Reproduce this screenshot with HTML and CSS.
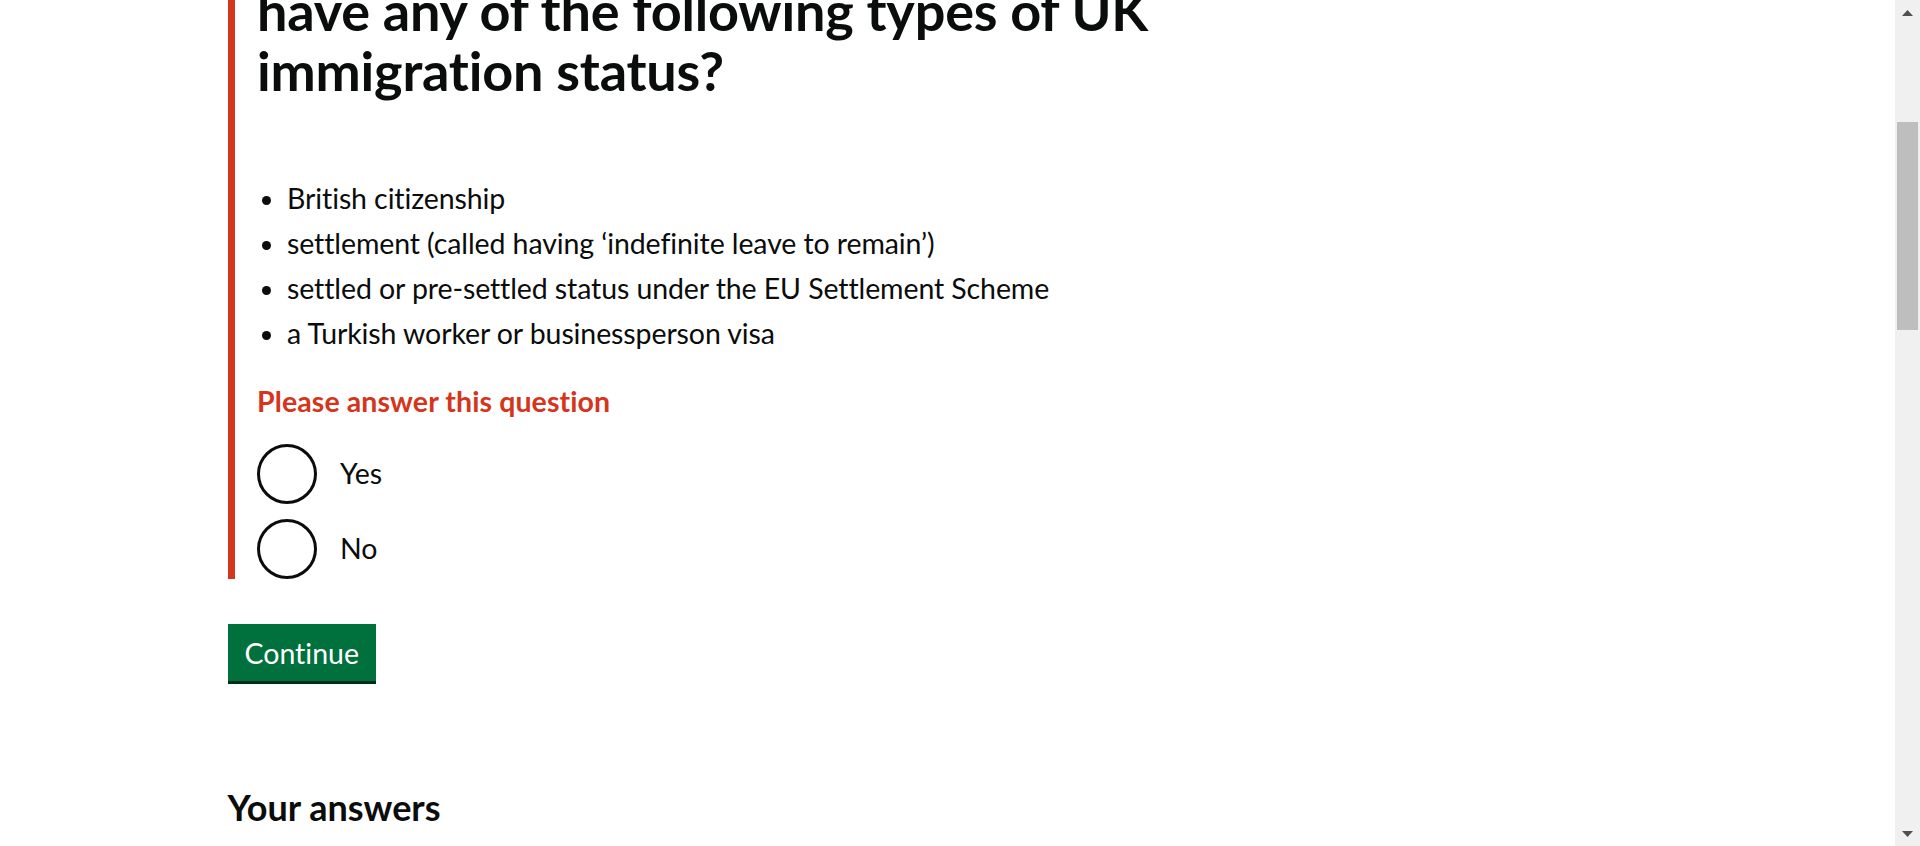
FILE: index.html
```html
<!DOCTYPE html>
<html lang="en">
<head>
<meta charset="utf-8">
<title>Immigration status</title>
<link rel="stylesheet" href="styles.css">
</head>
<body>
<div class="viewport">
  <main class="width-container">
    <form class="form">
      <div class="form-group form-group--error">
        <fieldset class="fieldset">
          <legend class="legend">
            <h1 class="heading-l">have any of the following types of UK immigration status?</h1>
          </legend>
          <ul class="list list--bullet">
            <li>British citizenship</li>
            <li>settlement (called having ‘indefinite leave to remain’)</li>
            <li>settled or pre-settled status under the EU Settlement Scheme</li>
            <li>a Turkish worker or businessperson visa</li>
          </ul>
          <p class="error-message">Please answer this question</p>
          <div class="radios">
            <label class="radio">
              <input class="radio__input" type="radio" name="status" value="yes">
              <span class="radio__circle"></span>
              <span class="radio__label">Yes</span>
            </label>
            <label class="radio">
              <input class="radio__input" type="radio" name="status" value="no">
              <span class="radio__circle"></span>
              <span class="radio__label">No</span>
            </label>
          </div>
        </fieldset>
      </div>
      <button class="button" type="button">Continue</button>
    </form>
    <h2 class="heading-m">Your answers</h2>
  </main>
</div>
<div class="scrollbar" aria-hidden="true">
  <div class="scrollbar__btn">
    <svg width="11" height="6" viewBox="0 0 11 6"><polygon points="5.5,0 11,6 0,6" fill="#505050"/></svg>
  </div>
  <div class="scrollbar__track"><div class="scrollbar__thumb"></div></div>
  <div class="scrollbar__btn">
    <svg width="11" height="6" viewBox="0 0 11 6"><polygon points="0,0 11,0 5.5,6" fill="#505050"/></svg>
  </div>
</div>
</body>
</html>
```

FILE: styles.css
```css
html, body {
  margin: 0;
  padding: 0;
  height: 100%;
  background: #ffffff;
}

body {
  display: flex;
  overflow: hidden;
  font-family: Lato, "Liberation Sans", Arial, sans-serif;
  font-variant-ligatures: no-common-ligatures;
  color: #0b0c0c;
}

.viewport {
  flex: 1;
  min-width: 0;
  overflow: hidden;
}

.width-container {
  max-width: 1440px;
  margin: 0 auto;
}

.form {
  margin: 0;
}

.form-group {
  margin-bottom: 45px;
}

.form-group--error {
  border-left: 7.5px solid #d4351c;
  padding-left: 22.5px;
}

.fieldset {
  margin: 0;
  padding: 0;
  border: 0;
  min-width: 0;
}

.legend {
  padding: 0;
  display: block;
  width: 100%;
}

.heading-l {
  margin: -19px 0 79px;
  font-size: 54px;
  line-height: 60px;
  font-weight: 700;
  letter-spacing: -0.2px;
  max-width: 960px;
}

.list {
  margin: 0 0 30px;
  padding: 0 0 0 30px;
  font-size: 28.5px;
  line-height: 37.5px;
  letter-spacing: -0.1px;
}

.list li {
  margin-bottom: 7.5px;
}

.list li:last-child {
  margin-bottom: 0;
}

.error-message {
  margin: 0 0 23.5px;
  color: #d4351c;
  font-weight: 700;
  font-size: 28.5px;
  line-height: 37.5px;
  letter-spacing: 0.1px;
}

.radios {
  display: flex;
  flex-direction: column;
  gap: 15px;
}

.radio {
  display: flex;
  align-items: center;
  height: 60px;
  cursor: pointer;
}

.radio__input {
  position: absolute;
  opacity: 0;
  margin: 0;
  width: 1px;
  height: 1px;
}

.radio__circle {
  box-sizing: border-box;
  width: 60px;
  height: 60px;
  border: 3px solid #0b0c0c;
  border-radius: 50%;
  flex: none;
}

.radio__label {
  padding-left: 23px;
  font-size: 28.5px;
  line-height: 37.5px;
}

.button {
  display: inline-block;
  box-sizing: border-box;
  margin: 0 0 48px;
  padding: 12px 14px 10.5px;
  border: 3px solid transparent;
  border-radius: 0;
  background: #00703c;
  color: #ffffff;
  box-shadow: 0 3px 0 #002d18;
  font-family: inherit;
  font-variant-ligatures: no-common-ligatures;
  font-size: 28.5px;
  line-height: 1;
  font-weight: 400;
  cursor: pointer;
}

.heading-m {
  margin: 56px 0 0;
  font-size: 36px;
  line-height: 45px;
  font-weight: 700;
}

.scrollbar {
  width: 25px;
  flex: none;
  height: 100vh;
  background: #f0f0f0;
  display: flex;
  flex-direction: column;
}

.scrollbar__btn {
  height: 25px;
  flex: none;
  display: flex;
  align-items: center;
  justify-content: center;
}

.scrollbar__track {
  flex: 1;
  padding: 0 2px;
}

.scrollbar__thumb {
  margin-top: 97px;
  height: 208px;
  background: #bebebe;
}
```
